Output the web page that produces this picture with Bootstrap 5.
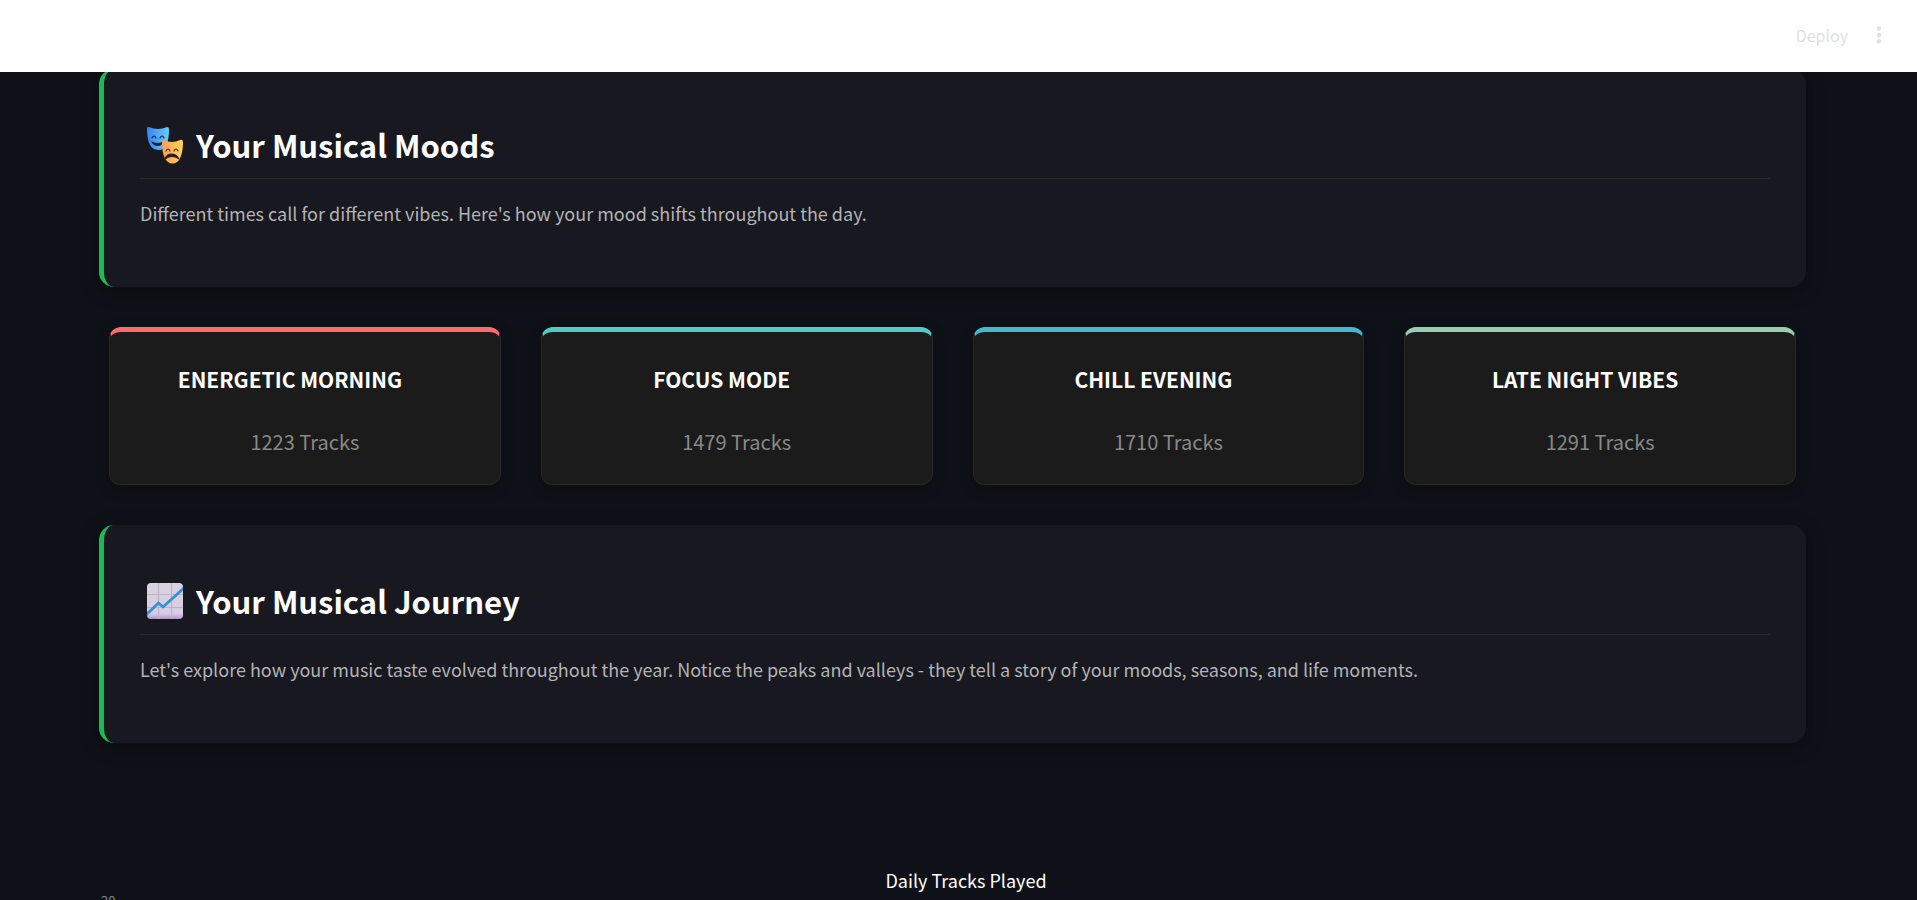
<!DOCTYPE html>
<html lang="en">
<head>
<meta charset="utf-8">
<meta name="viewport" content="width=device-width, initial-scale=1">
<title>Your Music Wrapped</title>
<link href="https://cdn.jsdelivr.net/npm/bootstrap@5.3.0/dist/css/bootstrap.min.css" rel="stylesheet">
<style>
  body { background: #0e1117; color: #fff; font-family: "Noto Sans CJK JP", "Noto Sans", sans-serif; }
  .topbar { height: 72px; background: #fff; padding: 0 31px 2px; }
  .topbar button { color: #e1e1e2; font-size: 16px; line-height: 24px; font-weight: 400; }
  .page { height: 100vh; padding: 69px 111px 0 99px; }
  .story { background: #181820; border-left: 5px solid #1db954; border-radius: 15px; padding: 36px; box-shadow: 0 4px 20px rgba(0,0,0,.3); height: 218px; }
  .story h2 { font-size: 31px; line-height: 44px; font-weight: 700; padding: 18px 0 11px 6px; margin: 0 0 18px; border-bottom: 1px solid #2a2a2c; gap: 12px; }
  .story p { font-size: 18px; line-height: 32px; color: #b3b3b3; margin: 0; }
  .moods { display: grid; grid-template-columns: repeat(4, 1fr); gap: 40px; padding: 40px 10px; }
  .mood { background: #1b1b1b; border: 1px solid #282828; border-top: 5px solid; border-radius: 12px; height: 158px; padding: 31px 24px 0; text-align: center; box-shadow: 0 4px 15px rgba(0,0,0,.2); }
  .mood h3 { font-size: 21px; line-height: 32px; font-weight: 700; margin: 0 0 31px; padding-right: 30px; color: #fff; }
  .mood p { font-size: 20px; line-height: 32px; color: #888; margin: 0; }
  .morning { border-top-color: #ff6b6b; }
  .focus-mode { border-top-color: #4ecdc4; }
  .evening { border-top-color: #45b7d1; }
  .night { border-top-color: #96ceb4; }
  .chart { margin-top: 125px; }
  .chart h4 { font-size: 18px; line-height: 24px; font-weight: 400; margin: 0; padding-left: 27px; }
  .tick { font-size: 13px; line-height: 18px; color: #85868c; padding-left: 2px; }
</style>
</head>
<body>
<header class="topbar fixed-top d-flex align-items-center justify-content-end gap-4">
  <button type="button" class="btn p-0 border-0">Deploy</button>
  <button type="button" class="btn p-0 border-0 d-flex" aria-label="Menu">
    <svg width="14" height="20" viewBox="0 0 14 20" fill="#e1e1e2"><circle cx="7" cy="3.5" r="2.2"/><circle cx="7" cy="10" r="2.2"/><circle cx="7" cy="16.3" r="2.2"/></svg>
  </button>
</header>
<main class="page overflow-hidden">
  <section class="story">
    <h2 class="d-flex align-items-center">
      <svg width="38" height="38" viewBox="0 0 38 38" aria-hidden="true">
        <defs>
          <linearGradient id="blue"><stop stop-color="#3584f5"/><stop offset="1" stop-color="#65d0f9"/></linearGradient>
          <linearGradient id="gold"><stop stop-color="#ff9d52"/><stop offset="1" stop-color="#ffd35a"/></linearGradient>
        </defs>
        <path d="M1 2Q1 1 3 1Q12 5 21 1Q23 1 23 3C23 13 21 20 17 23Q13 25 8 23C3 20 1 13 1 2Z" fill="url(#blue)"/>
        <path d="M6 12q2-4 4 0M14 12q2-4 4 0" fill="none" stroke="#172a5c" stroke-width="1.2" stroke-linecap="round"/>
        <path d="M5 15Q12 19 18 15Q16 20 12 20Q7 20 5 15Z" fill="#152238"/>
        <path d="M16 16Q16 14 18 14Q26 18 34 14Q37 13 37 16C37 25 35 33 31 36Q26 39 22 36C18 33 16 26 16 16Z" fill="url(#gold)"/>
        <path d="M20 25q2-4 4 0M28 25q2-4 4 0" fill="none" stroke="#493126" stroke-width="1.2" stroke-linecap="round"/>
        <path d="M19 33Q20 28 25.500 28Q31 28 33 33Q26 28 19 33Z" fill="#2a1b22" stroke="#2a1b22"/>
      </svg>
      <span>Your Musical Moods</span>
    </h2>
    <p>Different times call for different vibes. Here's how your mood shifts throughout the day.</p>
  </section>

  <section class="moods">
    <article class="mood morning"><h3>ENERGETIC MORNING</h3><p>1223 Tracks</p></article>
    <article class="mood focus-mode"><h3>FOCUS MODE</h3><p>1479 Tracks</p></article>
    <article class="mood evening"><h3>CHILL EVENING</h3><p>1710 Tracks</p></article>
    <article class="mood night"><h3>LATE NIGHT VIBES</h3><p>1291 Tracks</p></article>
  </section>

  <section class="story">
    <h2 class="d-flex align-items-center">
      <svg width="38" height="38" viewBox="0 0 38 38" aria-hidden="true">
        <defs>
          <linearGradient id="paper" x2="0" y2="1"><stop stop-color="#d9d3de"/><stop offset=".85" stop-color="#d8cce5"/><stop offset="1" stop-color="#b396cb"/></linearGradient>
          <clipPath id="sheet"><rect x="1" y="1" width="36" height="36" rx="4"/></clipPath>
        </defs>
        <g clip-path="url(#sheet)">
          <path d="M1 1h36v36H1z" fill="url(#paper)"/>
          <path d="M12.500 1v36M25.500 1v36M1 12.500h36M1 25.500h36" stroke="#bdb4c3" stroke-width="1.200"/>
          <path d="M0 33L12.500 21L17 25L38 6" fill="none" stroke="#3790d8" stroke-width="2.800" stroke-linejoin="round"/>
        </g>
      </svg>
      <span>Your Musical Journey</span>
    </h2>
    <p>Let's explore how your music taste evolved throughout the year. Notice the peaks and valleys - they tell a story of your moods, seasons, and life moments.</p>
  </section>

  <section class="chart">
    <h4 class="text-center">Daily Tracks Played</h4>
    <div class="tick">20</div>
  </section>
</main>
<script src="https://cdn.jsdelivr.net/npm/bootstrap@5.3.0/dist/js/bootstrap.bundle.min.js"></script>
</body>
</html>
